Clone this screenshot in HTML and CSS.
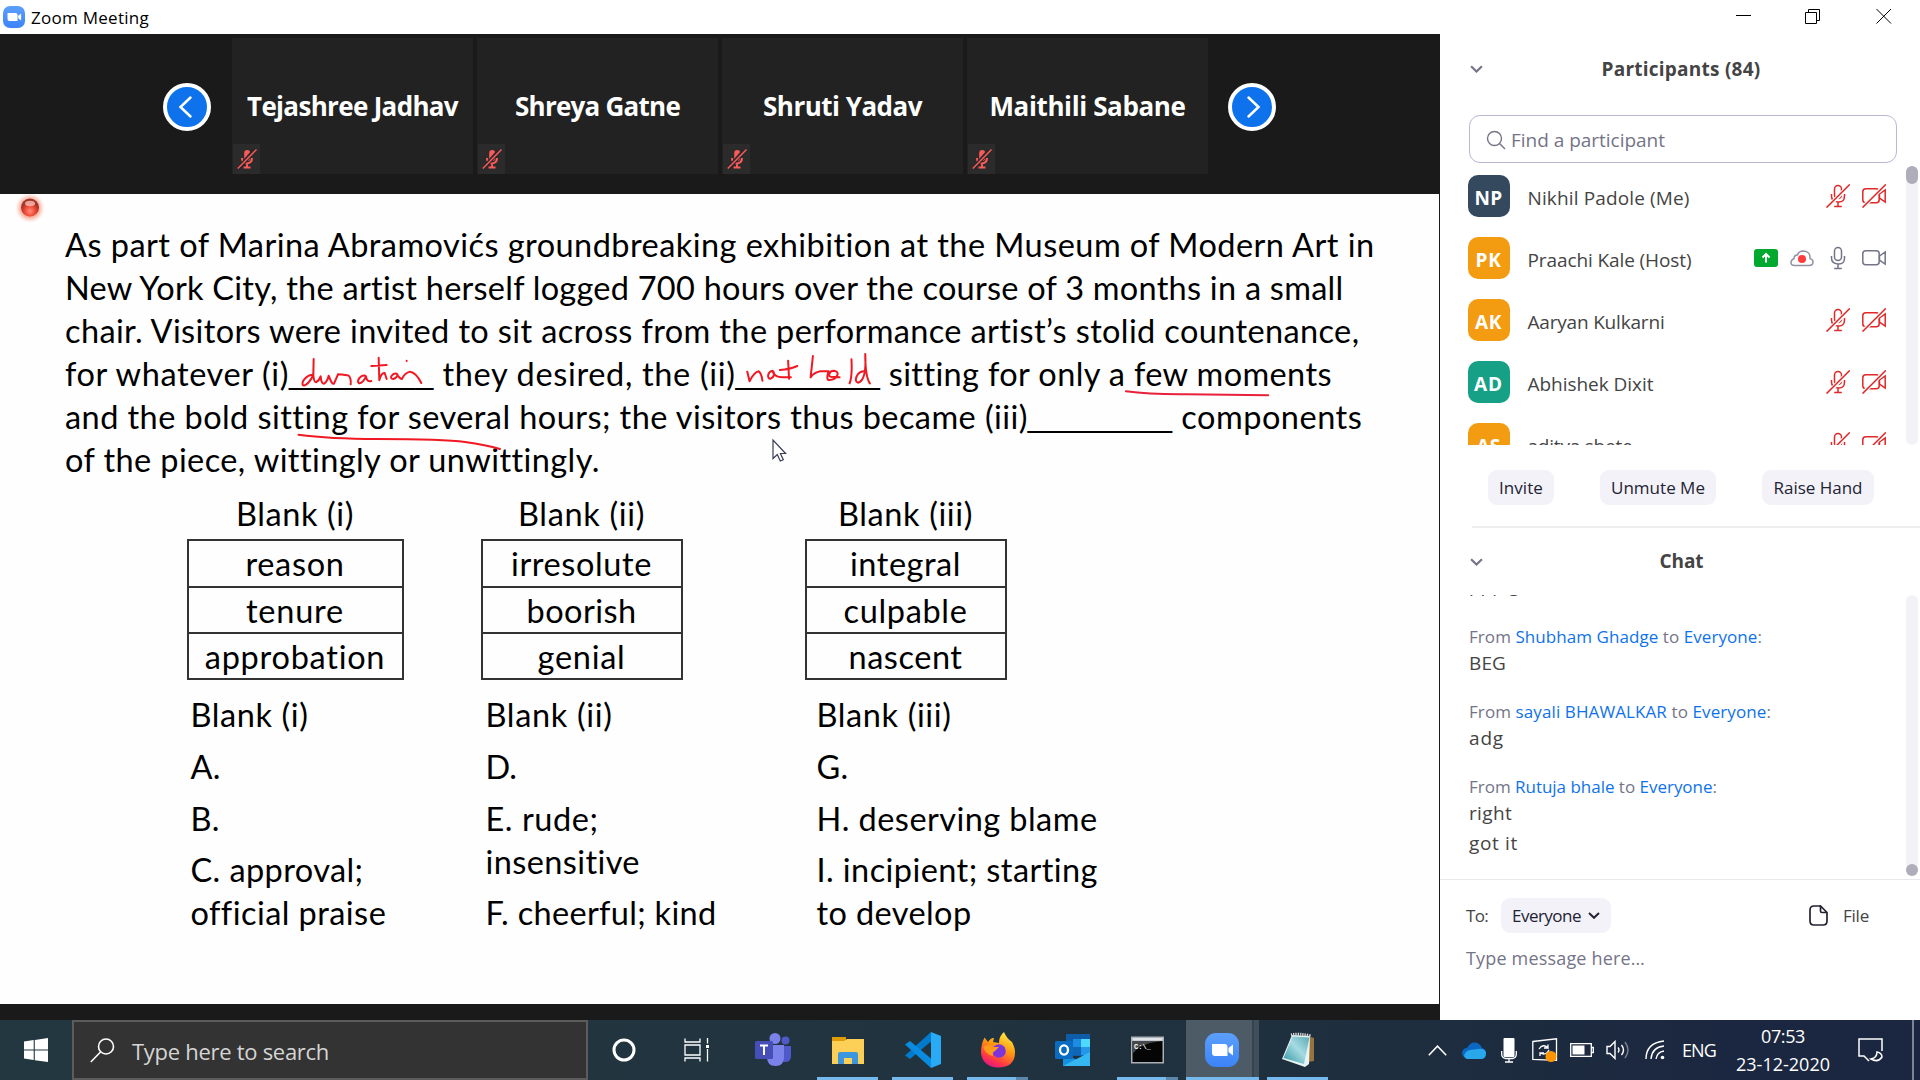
FILE: index.html
```html
<!DOCTYPE html>
<html lang="en">
<head>
<meta charset="utf-8">
<title>Zoom Meeting</title>
<link rel="stylesheet" href="styles.css">
</head>
<body>
<svg class="defs" width="0" height="0">
  <defs>
    <linearGradient id="zoomBlue" x1="0" y1="0" x2="0" y2="1"><stop offset="0" stop-color="#5c9ffb"/><stop offset="1" stop-color="#3c84f8"/></linearGradient>
    <radialGradient id="recGlow"><stop offset=".55" stop-color="#f49a84"/><stop offset="1" stop-color="#fbd0c0" stop-opacity="0"/></radialGradient>
    <radialGradient id="recBall" cy=".7"><stop offset="0" stop-color="#ff8f7c"/><stop offset=".6" stop-color="#ee4734"/><stop offset="1" stop-color="#a3342a"/></radialGradient>
    <linearGradient id="foxFlame" x1=".8" y1="0" x2=".3" y2="1"><stop offset="0" stop-color="#fff04a"/><stop offset=".45" stop-color="#ff980e"/><stop offset=".8" stop-color="#ff3647"/><stop offset="1" stop-color="#e31587"/></linearGradient>
    <linearGradient id="padGlass" x1="0" y1="1" x2="1" y2="0"><stop offset="0" stop-color="#2f93a1"/><stop offset=".55" stop-color="#a6dbe2"/><stop offset="1" stop-color="#5aa9b6"/></linearGradient>
    <symbol id="mic-off-solid" viewBox="0 0 20 20"><rect x="7.2" y="1" width="6" height="11" rx="3" fill="#f95a5a"/><path d="M5 9q0 5 5 5.500q5-.5 5-5.500M10 14v4M6.500 18.500h7" fill="none" stroke="#f95a5a" stroke-width="2"/><path d="M18.500 0L1 20" stroke="#282828" stroke-width="4"/><path d="M19.500 .5L.8 19.500" stroke="#f95a5a" stroke-width="1.500"/></symbol>
    <symbol id="mic" viewBox="0 0 24 24"><g fill="none" stroke="currentColor" stroke-width="1.500"><rect x="8.500" y="1.500" width="7" height="13" rx="3.500"/><path d="M5.500 10v2q0 5.500 6.500 6t6.500-6v-2M12 18v4.500M8.200 22.500h7.600"/></g></symbol>
    <symbol id="mic-off" viewBox="0 0 24 24"><use href="#mic"/><path d="M24.500 0L1.500 23.500" stroke="#fff" stroke-width="4"/><path d="M23.800 .4L.5 23.600" stroke="currentColor" stroke-width="1.500"/></symbol>
    <symbol id="cam" viewBox="0 0 24 24"><g fill="none" stroke="currentColor" stroke-width="1.500"><rect x=".8" y="4.800" width="16.400" height="14" rx="3"/><path d="M17.500 10L23.200 6v12l-5.700-4z"/></g></symbol>
    <symbol id="cam-off" viewBox="0 0 24 24"><use href="#cam"/><path d="M24 0L0 24" stroke="#fff" stroke-width="4"/><path d="M23.800 .4L.5 23.600" stroke="currentColor" stroke-width="1.500"/></symbol>
    <symbol id="zoom-cam" viewBox="0 0 34 34"><rect width="34" height="34" rx="11" fill="url(#zoomBlue)"/><path d="M7 11h12.500q3 0 3 3v9H10q-3 0-3-3zM23.500 15l4.500-3.500v11L23.500 19z" fill="#fff"/></symbol>
    <symbol id="chev" viewBox="0 0 12 7"><path d="M1 1l5 4.800L11 1" fill="none" stroke="currentColor" stroke-width="2"/></symbol>
  </defs>
</svg>

<header class="titlebar">
  <svg class="app-icon" width="22" height="22"><use href="#zoom-cam"/></svg>
  <span class="app-name" data-w="118">Zoom Meeting</span>
  <svg class="win-btns" width="156" height="17" fill="none" stroke="#000"><path d="M0 7.500h15"/><path d="M69.500 4.500h11v11h-11zM72.500 4V1.500h11v11H81"/><path d="M140.500 1l14.500 14.500M155 1l-14.500 14.500"/></svg>
</header>

<main class="meeting">
  <section class="stage">
    <div class="strip">
      <svg class="nav" width="48" height="48"><circle cx="24" cy="24" r="22" fill="#0e72ed" stroke="#fff" stroke-width="4"/><path d="M27.500 14.500L17.500 24l10 9.500" fill="none" stroke="#fff" stroke-width="2.500" stroke-linecap="round"/></svg>
      <div class="tiles">
        <div class="tile"><span data-w="211">Tejashree Jadhav</span><i class="muted"><svg width="20" height="20"><use href="#mic-off-solid"/></svg></i></div>
        <div class="tile"><span data-w="165">Shreya Gatne</span><i class="muted"><svg width="20" height="20"><use href="#mic-off-solid"/></svg></i></div>
        <div class="tile"><span data-w="159">Shruti Yadav</span><i class="muted"><svg width="20" height="20"><use href="#mic-off-solid"/></svg></i></div>
        <div class="tile"><span data-w="196">Maithili Sabane</span><i class="muted"><svg width="20" height="20"><use href="#mic-off-solid"/></svg></i></div>
      </div>
      <svg class="nav" width="48" height="48"><circle cx="24" cy="24" r="22" fill="#0e72ed" stroke="#fff" stroke-width="4"/><path d="M20.500 14.500L30.500 24l-10 9.500" fill="none" stroke="#fff" stroke-width="2.500" stroke-linecap="round"/></svg>
    </div>

    <article class="slide">
      <div class="passage">
        <div class="line"><span data-w="1310">As part of Marina Abramovićs groundbreaking exhibition at the Museum of Modern Art in</span></div>
        <div class="line"><span data-w="1279">New York City, the artist herself logged 700 hours over the course of 3 months in a small</span></div>
        <div class="line"><span data-w="1295">chair. Visitors were invited to sit across from the performance artist’s stolid countenance,</span></div>
        <div class="line"><span data-w="224">for whatever (i)</span><span class="gap" data-w="144.5">________</span><span data-w="302"> they desired, the (ii)</span><span class="gap" data-w="144.5">________</span><span data-w="451"> sitting for only a few moments</span></div>
        <div class="line"><span data-w="962">and the bold sitting for several hours; the visitors thus became (iii)</span><span class="gap" data-w="144.5">________</span><span data-w="190"> components</span></div>
        <div class="line"><span data-w="533">of the piece, wittingly or unwittingly.</span></div>
      </div>

      <div class="choices">
        <div class="choice"><h3><span data-w="118">Blank (i)</span></h3><ul><li><span data-w="99">reason</span></li><li><span data-w="98">tenure</span></li><li><span data-w="181">approbation</span></li></ul></div>
        <div class="choice"><h3><span data-w="127">Blank (ii)</span></h3><ul><li><span data-w="141">irresolute</span></li><li><span data-w="110">boorish</span></li><li><span data-w="88">genial</span></li></ul></div>
        <div class="choice"><h3><span data-w="135">Blank (iii)</span></h3><ul><li><span data-w="111">integral</span></li><li><span data-w="124">culpable</span></li><li><span data-w="114">nascent</span></li></ul></div>
      </div>

      <div class="notes">
        <div class="note"><p><span data-w="118">Blank (i)</span></p><p><span data-w="30">A.</span></p><p><span data-w="29">B.</span></p><p><span data-w="173">C. approval;</span><br><span data-w="194">official praise</span></p></div>
        <div class="note"><p><span data-w="127">Blank (ii)</span></p><p><span data-w="31">D.</span></p><p><span data-w="113">E. rude;</span><br><span data-w="155">insensitive</span></p><p><span data-w="231">F. cheerful; kind</span></p></div>
        <div class="note"><p><span data-w="135">Blank (iii)</span></p><p><span data-w="32">G.</span></p><p><span data-w="281">H. deserving blame</span></p><p><span data-w="282">I. incipient; starting</span><br><span data-w="155">to develop</span></p></div>
      </div>

      <svg class="ink" viewBox="0 194 1440 810" width="1440" height="810">
        <circle cx="30" cy="208" r="15" fill="url(#recGlow)"/><circle cx="30" cy="207.500" r="9" fill="url(#recBall)"/><ellipse cx="30" cy="203.500" rx="5" ry="2.800" fill="#ffc9bf" opacity=".75"/>
        <g fill="none" stroke="#f01822" stroke-width="2" stroke-linecap="round" stroke-linejoin="round">
          <g transform="translate(280 345) scale(.3333)"><path vector-effect="non-scaling-stroke" d="M96 90C84 88 64 108 68 120C76 126 98 104 100 84L101 42L100 90Q102 112 108 112Q118 106 122 94Q124 118 132 116Q142 110 146 92Q156 120 162 116L174 88Q200 90 206 92Q214 100 212 118M256 92C242 88 230 106 236 114C246 118 256 100 258 94Q260 112 274 108M296 38L298 106Q304 82 314 84L320 102M274 63L320 60M350 86C336 84 326 102 340 102C352 98 356 88 350 86Q358 100 366 102Q372 86 390 80Q408 82 424 114M380 47v1"/></g>
          <g transform="translate(700 340) scale(.459 .3333)"><path vector-effect="non-scaling-stroke" d="M103 95L108 124Q118 96 128 94Q134 100 136 122M158 92C146 96 146 118 154 116C164 110 162 94 158 94Q162 112 180 112L198 112M192 62L194 116M174 90Q196 88 212 78M246 48L241 112Q248 98 262 94L280 94Q274 122 282 120C300 118 306 94 292 92C280 92 280 108 284 110L304 112M330 58Q332 110 326 130M356 94C342 96 334 124 344 128C358 124 362 90 360 42Q360 110 370 130"/><path vector-effect="non-scaling-stroke" stroke="#e8203a" d="M928 154Q980 164 1060 163L1238 166"/></g>
          <path d="M298.500 434.800Q330 439 377 439Q444 439 465 442Q486 445 500 449"/>
        </g>
        <path d="M773 440v18.500l4.300-4 3 6.500 3-1.200-2.900-6.300h5.200z" fill="#fff" stroke="#3b3c57" stroke-width="1.200"/>
      </svg>
    </article>
  </section>

  <aside class="side">
    <div class="people">
      <div class="pane-title"><svg class="fold" width="13" height="8"><use href="#chev"/></svg><span data-w="159">Participants (84)</span></div>
      <div class="find"><svg width="20" height="20" fill="none" stroke="#747487" stroke-width="1.400"><circle cx="8.500" cy="8.500" r="7"/><path d="M13.500 13.500L19 19"/></svg><span data-w="154">Find a participant</span></div>
      <div class="roster">
        <div class="rows">
          <div class="person"><b class="navy"><span data-w="28">NP</span></b><span class="name"><span data-w="162">Nikhil Padole (Me)</span></span><svg class="off" width="24" height="24"><use href="#mic-off"/></svg><svg class="off" width="24" height="24"><use href="#cam-off"/></svg></div>
          <div class="person"><b><span data-w="26">PK</span></b><span class="name"><span data-w="164">Praachi Kale (Host)</span></span><svg width="24" height="24"><rect y="3" width="24" height="18" rx="3" fill="#03a82f"/><path d="M12 16.500V9M8.500 11.500L12 8l3.500 3.500" fill="none" stroke="#fff" stroke-width="2"/></svg><svg width="24" height="24"><path d="M4.500 19.500H19q4 0 4-3.500 0-2.500-3-3.500.5-7-6.500-7.500-5 0-6 4-3-.5-3.500 3.500-3 1.500-3 4 0 3 3.500 3z" fill="none" stroke="#9292a0" stroke-width="1.500"/><circle cx="12" cy="13" r="4" fill="#ff3b3b"/></svg><svg width="24" height="24"><use href="#mic"/></svg><svg width="24" height="24"><use href="#cam"/></svg></div>
          <div class="person"><b><span data-w="27">AK</span></b><span class="name"><span data-w="137">Aaryan Kulkarni</span></span><svg class="off" width="24" height="24"><use href="#mic-off"/></svg><svg class="off" width="24" height="24"><use href="#cam-off"/></svg></div>
          <div class="person"><b class="green"><span data-w="29">AD</span></b><span class="name"><span data-w="126">Abhishek Dixit</span></span><svg class="off" width="24" height="24"><use href="#mic-off"/></svg><svg class="off" width="24" height="24"><use href="#cam-off"/></svg></div>
          <div class="person"><b><span data-w="24">AS</span></b><span class="name"><span data-w="105">aditya shete</span></span><svg class="off" width="24" height="24"><use href="#mic-off"/></svg><svg class="off" width="24" height="24"><use href="#cam-off"/></svg></div>
        </div>
        <div class="track"><div class="thumb"></div></div>
      </div>
      <div class="actions"><span class="pill w66"><span data-w="44">Invite</span></span><span class="pill w116"><span data-w="94">Unmute Me</span></span><span class="pill w112"><span data-w="89">Raise Hand</span></span></div>
    </div>

    <div class="chat">
      <div class="pane-title"><svg class="fold" width="13" height="8"><use href="#chev"/></svg><span data-w="44">Chat</span></div>
      <div class="log">
        <div class="msgs">
          <p class="text cut"><span data-w="50">ppp g</span></p>
          <p class="from"><span data-w="293">From <em>Shubham Ghadge</em> to <em>Everyone</em>:</span></p>
          <p class="text"><span data-w="37">BEG</span></p>
          <p class="from"><span data-w="302">From <em>sayali BHAWALKAR</em> to <em>Everyone</em>:</span></p>
          <p class="text"><span data-w="35">adg</span></p>
          <p class="from"><span data-w="248">From <em>Rutuja bhale</em> to <em>Everyone</em>:</span></p>
          <p class="text"><span data-w="43">right</span></p>
          <p class="text more"><span data-w="49">got it</span></p>
        </div>
        <div class="track bottom"><div class="thumb round"></div></div>
      </div>
      <div class="compose">
        <div class="to"><span class="to-label"><span data-w="22">To:</span></span><span class="pill who"><span data-w="69">Everyone</span><svg width="12" height="7"><use href="#chev"/></svg></span>
          <svg class="file-icon" width="19" height="21" fill="none" stroke="#232333" stroke-width="1.700"><path d="M11 1H5Q1 1 1 5v11q0 4 4 4h9q4 0 4-4V7.500L11.500 1v5q0 1.500 1.500 1.500h5"/></svg><span data-w="26">File</span></div>
        <p class="placeholder"><span data-w="179">Type message here…</span></p>
      </div>
    </div>
  </aside>
</main>

<footer class="taskbar">
  <div class="start"><svg width="24" height="24" fill="#fff"><path d="M0 3.500L9.700 2v9.500H0zM10.800 1.900L24 0v11.500H10.800zM0 12.500h9.700V22L0 20.600zM10.800 12.500H24V24l-13.200-1.800z"/></svg></div>
  <div class="search"><svg width="25" height="25" fill="none" stroke="#fff" stroke-width="1.600"><circle cx="16" cy="8.500" r="7.500"/><path d="M10.500 14L.8 24"/></svg><span data-w="197">Type here to search</span></div>
  <div class="app ring"><svg width="26" height="26"><circle cx="13" cy="13" r="10" fill="none" stroke="#fff" stroke-width="3"/></svg></div>
  <div class="app view"><svg width="26" height="24" fill="none" stroke="#fff" stroke-width="1.300"><path d="M1 .5V4h15V.5M1 7h15v10H1zM1 23.500V20h15v3.500M23.500 0v5.500M23.500 11v12.500"/><path d="M22 7h3v3h-3z" fill="#fff" stroke="none"/></svg></div>
  <div class="app"><svg width="36" height="34"><circle cx="20" cy="5.500" r="5.500" fill="#7b83eb"/><circle cx="30.500" cy="7.500" r="4" fill="#5059c9"/><path d="M24 13h12v10q0 6-6 6t-6-6z" fill="#5059c9"/><path d="M12 12h17v12q0 9-8.500 9T12 24z" fill="#7b83eb"/><rect y="8" width="18" height="18" rx="1.500" fill="#464eb8"/><path d="M5 12.500h8M9 12.500V22" stroke="#fff" stroke-width="2"/></svg></div>
  <div class="app open"><svg width="34" height="34"><path d="M1 4h14v6H1z" fill="#e09b05"/><path d="M1 8h12l3-2h17v25H1z" fill="#fccf57"/><path d="M7 31V21q0-2 2-2h16q2 0 2 2v10h-6v-6h-8v6z" fill="#3b97dd"/></svg></div>
  <div class="app open"><svg width="36" height="36"><path d="M26 0l10 4v28l-10 4z" fill="#29aaf4"/><path d="M26 0v9.500L5 27l-5-3.500z" fill="#007acc"/><path d="M26 36v-9.500L5 9 0 12.500z" fill="#0a8be0"/></svg></div>
  <div class="app open multi"><svg width="36" height="36"><path d="M18 35.500C7 35.500 1 28 1 20Q1 12 4.500 5.500L8 10q3-4.500 6-4l-1 4 6 1q0-7 5-11 3 7 8 10 3 6 3 10 0 15.500-17 15.500z" fill="url(#foxFlame)"/><circle cx="19" cy="19" r="6.800" fill="#7c35dc"/><path d="M3 15q6-4 10 0h6l-4 4q-3 1-2 5Q6 23 3 15z" fill="#ff9a1c"/></svg></div>
  <div class="app"><svg width="36" height="34"><rect x="11" y="1" width="24" height="22" fill="#0f5ca8"/><path d="M18 6h8v8h-8z" fill="#1f8ce3"/><path d="M26 6h9v8h-9z" fill="#50d9ff"/><path d="M18 14h8v8h-8z" fill="#1066b5"/><path d="M26 14h9v8h-9z" fill="#2497e8"/><path d="M8 20l14 7 13-8v14H8z" fill="#1490df"/><path d="M8 33l27-14v14z" fill="#35b8f1"/><rect y="8" width="18" height="18" rx="1.500" fill="#0a6cc0"/><ellipse cx="9" cy="17" rx="4" ry="4.600" fill="none" stroke="#fff" stroke-width="2.300"/></svg></div>
  <div class="app open multi"><svg width="36" height="30"><rect x="1" y="1.500" width="33" height="27" fill="#aab0b5"/><path d="M2.500 3h30v2.500h-30z" fill="#dfe4e8"/><path d="M2.500 6h30v21h-30z" fill="#050505"/><path d="M2.500 6h30Q10 8 2.500 19z" fill="#46494b"/><text x="4" y="14" class="prompt">C:\_</text></svg></div>
  <div class="app open active"><svg width="34" height="34"><use href="#zoom-cam"/></svg></div>
  <div class="app open"><svg width="36" height="36"><path d="M28 4l6 2v23l-6 1z" fill="#98733d"/><path d="M12 3l18 1-1 28-4 3L2 27z" fill="#e8f3f4"/><path d="M12.500 4.500l17 1L24 32 3.500 26z" fill="url(#padGlass)"/><path d="M11 3q8-2 20 1" fill="none" stroke="#ddd" stroke-width="3" stroke-dasharray="1.300 1"/></svg></div>

  <div class="tray">
    <svg width="19" height="11" fill="none" stroke="#fff" stroke-width="1.500"><path d="M.8 10.200L9.500 1.200l8.700 9"/></svg>
    <svg width="24" height="17"><path d="M5 16a5 5 0 0 1 0-10Q9-1 15.500 1 19 2.500 20 6q4 1 4 5 0 5-5 5z" fill="#0b67c2"/><path d="M2 14q1-5 6-6l8-1q7-1 8 4 0 6-5 6H5q-2 0-3-3z" fill="#28a8ea"/></svg>
    <svg width="16" height="25"><rect x="2.500" width="11" height="19" rx="1" fill="#fff"/><path d="M.7 13v3q0 4 4 4.500h6.600q4-.5 4-4.500v-3M8 20v4M4 24h8" fill="none" stroke="#fff" stroke-width="1.300"/></svg>
    <svg width="26" height="25" fill="none" stroke="#fff" stroke-width="1.300"><path d="M.8 3.500L24.500 .8v21.500L.8 21.300z"/><path d="M7 11q4-6 9-1V6.500M16 10h-4M17 12q-3 6-9 3v3M8 15h4"/><circle cx="19" cy="18.500" r="5.500" fill="#ff9500" stroke="none"/></svg>
    <svg class="battery" width="24" height="14"><path d="M.7 .7h20.600v12.600H.7zM21.500 4.500h1.800v5h-1.800" fill="none" stroke="#fff" stroke-width="1.300"/><path d="M2.500 2.500h12v9h-12z" fill="#fff"/></svg>
    <svg class="volume" width="24" height="20" fill="none" stroke="#fff" stroke-width="1.400"><path d="M1 6.500h3l5-5v17l-5-5H1zM12 7.500q2 2.500 0 5M15.500 5q4 5 0 10"/><path d="M19 2q6 8 0 16" stroke="#7a8293"/></svg>
    <svg width="20" height="20" fill="none" stroke="#fff" stroke-width="1.400"><path d="M1 19Q1 3 19 1M6 19Q7 7 19 6M11 19q1-7 8-8"/><circle cx="17.500" cy="17.500" r="1.800" fill="#fff" stroke="none"/></svg>
    <span class="lang"><span data-w="34">ENG</span></span>
    <div class="clock"><span data-w="44">07:53</span><span data-w="94">23-12-2020</span></div>
    <svg width="25" height="25" fill="none" stroke="#fff" stroke-width="1.500"><path d="M24 13V1H1v17h5l5 5M19 14q0 6-6 7 7 4 11-2 0-4-5-5z"/></svg>
  </div>
  <div class="peek"></div>
</footer>
<script src="fit.js"></script>
</body>
</html>
```
FILE: styles.css
```css
* { box-sizing: border-box; }
body { margin: 0; width: 1920px; height: 1080px; overflow: hidden; display: flex; flex-direction: column; background: #fff; font-family: "Open Sans", "Noto Sans", sans-serif; color: #444; }
h3, p, ul { margin: 0; padding: 0; font-weight: 400; }
li { list-style: none; }
svg { display: block; flex: none; }
.defs { position: absolute; }
[data-w] { white-space: pre; display: inline-block; }

.titlebar { height: 34px; flex: none; display: flex; align-items: center; padding: 0 28px 0 3px; color: #000; font-size: 17px; }
.app-icon { margin-right: 6px; }
.win-btns { margin: -1px 0 0 auto; }

.meeting { height: 986px; flex: none; display: flex; }
.stage { width: 1440px; background: #1a1a1a; display: flex; flex-direction: column; }
.strip { height: 160px; display: flex; padding: 4px 0 0 163px; }
.nav { margin-top: 45px; }
.tiles { display: flex; gap: 4px; margin: 0 20px 0 21px; }
.tile { position: relative; width: 241px; height: 136px; background: #222; display: flex; align-items: center; justify-content: center; color: #fff; font-size: 26px; font-weight: 700; padding-bottom: 1px; }
.muted { position: absolute; left: 1px; bottom: 0; width: 27px; height: 30px; background: #2b2b2b; display: flex; align-items: center; justify-content: center; }

.slide { position: relative; width: 1439px; height: 810px; background: #fefefe; padding-top: 28.500px; font-family: Lato, sans-serif; font-size: 32.500px; line-height: 43.1px; color: #000; }
.passage { padding-left: 65px; }
.line { height: 43.1px; display: flex; }
.gap { font-family: "Liberation Sans", Arial, sans-serif; font-size: 32px; }
.choices { display: grid; grid-template-columns: 217px 202px 202px; justify-content: start; margin: 11px 0 0 186.500px; gap: 77px; }
.choices .choice:last-child { margin-left: 45px; width: 202px; }
.choice h3 { font-size: 32.500px; text-align: center; margin-bottom: 4px; }
.choice ul { border: 2px solid #333; height: 141px; display: grid; grid-template-rows: repeat(3, 1fr); }
.choice li { display: flex; justify-content: center; padding-top: 1px; }
.choice li + li { border-top: 2px solid #333; }
.notes { display: grid; grid-template-columns: 295px 331px 300px; margin: 13px 0 0 190.500px; }
.note p + p { margin-top: 8.600px; }
.note p span { vertical-align: top; }
.ink { position: absolute; left: 0; top: 0; }

.side { width: 480px; display: flex; flex-direction: column; }
.people { height: 494px; display: flex; flex-direction: column; border-bottom: 2px solid #eee; margin-left: 32px; }
.pane-title { position: relative; height: 69px; flex: none; display: flex; align-items: center; justify-content: center; font-size: 19px; font-weight: 700; }
.people .pane-title { padding-right: 30px; }
.fold { position: absolute; left: 30px; top: 30px; color: #747487; }
.people .fold { left: -2px; top: 31px; }
.find { width: 428px; height: 48px; flex: none; margin: 12px 0 0 -3px; border: 1.500px solid #bab8d2; border-radius: 11px; display: flex; align-items: center; gap: 5px; padding: 1px 16px 0; color: #747487; font-size: 19px; }
.roster { display: flex; height: 279px; flex: none; margin-top: 3px; justify-content: space-between; }
.rows { overflow: hidden; width: 418px; margin-left: -4.500px; padding-top: 8.500px; }
.person { height: 42px; margin-bottom: 20px; display: flex; align-items: center; gap: 12px; color: #747487; font-size: 19px; }
.person b { width: 42px; height: 42px; border-radius: 10px; background: #f39c12; color: #fff; font-weight: 700; display: flex; align-items: center; justify-content: center; padding-top: 4px; }
.person .navy { background: #34495e; }
.person .green { background: #16a085; }
.person .name { flex: 1; color: #444; padding: 4px 0 0 6px; }
.person svg { margin-bottom: -1px; }
.person .off { color: #e02828; }
.track { width: 12px; background: #f2f2f7; border-radius: 6px; margin-right: 2px; display: flex; flex-direction: column; flex: none; }
.track.bottom { justify-content: flex-end; }
.thumb { height: 18px; background: #afadb9; border-radius: 6px; }
.thumb.round { height: 12px; }
.actions { display: flex; justify-content: space-between; margin: 25px 46px 0 16px; }
.pill { height: 35px; background: #f2f2f8; border-radius: 9px; color: #232333; font-size: 17px; display: flex; align-items: center; justify-content: center; }
.w66 { width: 66px; }
.w116 { width: 116px; }
.w112 { width: 112px; }

.chat { flex: 1; display: flex; flex-direction: column; }
.chat .pane-title { height: 67px; padding: 0 0 2px 3px; }
.log { height: 281px; flex: none; display: flex; justify-content: space-between; }
.msgs { overflow: hidden; padding-left: 29px; }
.from { height: 25px; line-height: 25px; margin-top: 20px; color: #747487; font-size: 17px; }
.from em { color: #0e72ed; font-style: normal; }
.text { height: 30px; line-height: 28px; font-size: 19px; color: #444; }
.text.cut { line-height: 30px; margin-top: -25px; }
.text.cut + .from { margin-top: 24px; }
.compose { border-top: 1px solid #e8e8ec; margin-top: 3px; padding: 18px 0 0 26px; flex: 1; font-size: 17px; }
.to { display: flex; align-items: center; }
.to-label { width: 35px; }
.who { width: 110px; gap: 7px; }
.file-icon { margin: 0 15px 0 198px; }
.placeholder { margin-top: 13px; color: #747487; font-size: 18px; }

.taskbar { height: 60px; flex: none; display: flex; background: linear-gradient(90deg, #22373f, #21333f 50%, #1e2e3e 72%, #1b2740 90%); color: #fff; }
.start { width: 72px; display: flex; align-items: center; justify-content: center; }
.search { width: 516px; background: #333; border: 2px solid #5c5c5c; display: flex; align-items: center; gap: 17px; padding-left: 16px; color: #d5d5d5; font-size: 22px; }
.search span { padding-top: 2px; }
.app { width: 61px; margin-right: 14px; display: flex; align-items: center; justify-content: center; position: relative; }
.app.ring { width: 72px; margin-right: 0; }
.app.view { width: 73px; margin-right: 9px; }
.app.open { border-bottom: 3px solid #76b9ed; padding-top: 3px; }
.app.multi { border-image: linear-gradient(90deg, #76b9ed 78%, #5c87aa 78%) 3; border-style: solid; border-width: 0 0 3px; }
.app.active { width: 73px; margin: 0 8px 0 -6px; padding-right: 1px; background: linear-gradient(90deg, #4d5b66 66px, #36444f 66px, #36444f 68px, #414f5b 68px); }
.prompt { font: bold 7px "Liberation Mono", monospace; fill: #fff; }
.tray { margin-left: auto; display: flex; align-items: center; gap: 15px; }
.battery { margin-left: -3px; }
.volume { margin-left: -3px; }
.lang { font-size: 18px; margin-left: 2px; }
.clock { display: flex; flex-direction: column; align-items: center; font-size: 18px; line-height: 28px; margin: 0 13px 0 5px; }
.peek { width: 8px; border-left: 2px solid #7b8494; margin-left: 29px; }
```
FILE: fit.js
```js
// Track each label so that it fills the width given in data-w.
document.querySelectorAll('[data-w]').forEach(function (el) {
  var natural = el.getBoundingClientRect().width;
  var spacing = (Number(el.dataset.w) - natural) / el.textContent.length;
  el.style.letterSpacing = spacing.toFixed(3) + 'px';
});
```
